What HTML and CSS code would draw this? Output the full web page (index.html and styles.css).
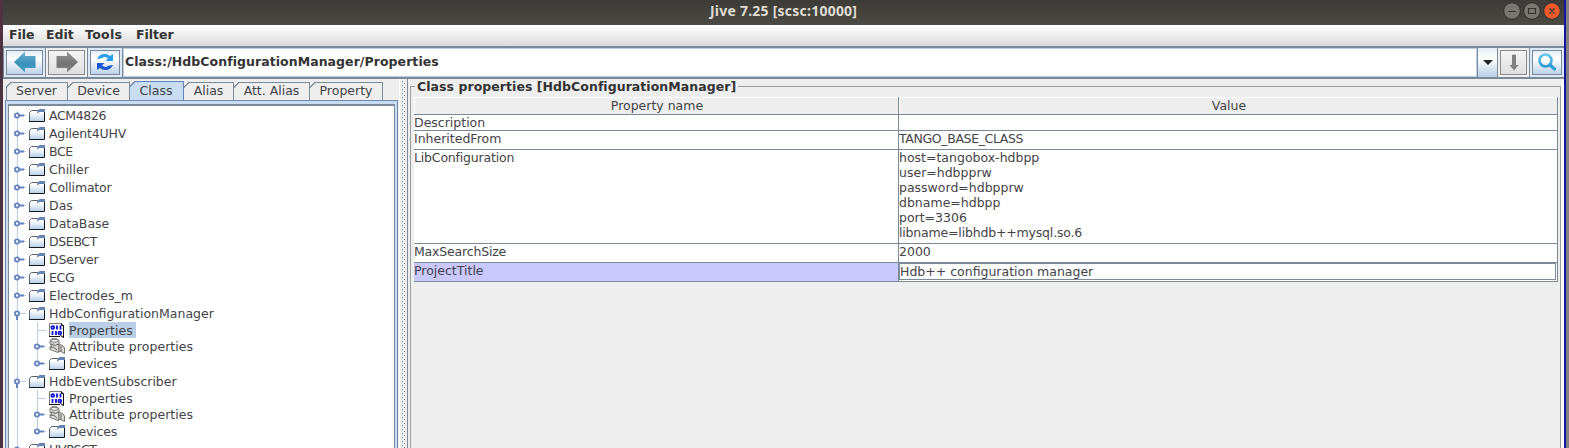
FILE: index.html
```html
<!DOCTYPE html>
<html lang="en">
<head>
<meta charset="utf-8">
<title>Jive 7.25 [scsc:10000]</title>
<link rel="stylesheet" href="styles.css">
</head>
<body>
<svg class="defs" width="0" height="0" aria-hidden="true">
  <defs>
    <linearGradient id="gFolder" x1="0" y1="0" x2="0" y2="1"><stop offset="0.2" stop-color="#fff"/><stop offset="1" stop-color="#b4cfe6"/></linearGradient>
    <linearGradient id="gBlue" x1="0" y1="0" x2="0" y2="1"><stop offset="0" stop-color="#6db4d2"/><stop offset="0.6" stop-color="#378fb8"/><stop offset="1" stop-color="#4fa5c8"/></linearGradient>
    <linearGradient id="gGray" x1="0" y1="0" x2="0" y2="1"><stop offset="0" stop-color="#969696"/><stop offset="0.6" stop-color="#727272"/><stop offset="1" stop-color="#8c8c8c"/></linearGradient>
    <linearGradient id="gLens" x1="0" y1="0" x2="0" y2="1"><stop offset="0" stop-color="#69c5ea"/><stop offset="1" stop-color="#2e98d3"/></linearGradient>
    <symbol id="folder" viewBox="0 0 16 13">
      <path d="M.5 12.500V3.500L2.500 1.500H8.500V4.500H15V12.500Z" fill="url(#gFolder)"/>
      <path d="M.5 12V3.500L2.500 1.500H9" fill="none" stroke="#59616e"/>
      <path d="M0 12.500H15.500V3" fill="none" stroke="#14171d"/>
      <path d="M8 4L8.500 2L10.500 0H16V3H10L9 4.500Z" fill="#6382b5"/>
    </symbol>
    <symbol id="knobClosed" viewBox="0 0 12 7">
      <path d="M5 3.500H10" stroke="#6382bf" stroke-width="2"/><path d="M10 3.500H12" stroke="#b8cfe5"/>
      <circle cx="3" cy="3.500" r="2.100" fill="#fff" stroke="#6382bf" stroke-width="1.800"/>
    </symbol>
    <symbol id="knobOpen" viewBox="0 0 12 12">
      <path d="M3 5V10" stroke="#6382bf" stroke-width="2"/><path d="M6 3.500H12" stroke="#b8cfe5"/>
      <circle cx="3" cy="3.500" r="2.100" fill="#fff" stroke="#6382bf" stroke-width="1.800"/>
    </symbol>
    <symbol id="bits" viewBox="0 0 16 15">
      <path d="M.5 .5H12.500L14.500 2.500V14.500L11.500 12.500L10.500 13.500H.5Z" fill="#fff" stroke="#777"/>
      <path d="M12.500 .5V2.500H14.500V14.500L11.500 12.500M0 13.500H11" fill="none" stroke="#111"/>
      <g fill="none" stroke="#1010d8" stroke-width="1.800"><circle cx="3.800" cy="4.500" r="1.400"/><path d="M8 2.500V6.500M11.500 2.500V6.500M3.500 8V12M7 8V12"/><circle cx="10.800" cy="10" r="1.400"/></g>
    </symbol>
    <symbol id="attr" viewBox="0 0 16 16">
      <path d="M1 2.500L3 .7H7.500L10 2.500V6L14 8L15.500 10V15.500L11 13L9 14.500L1 11.500V9L3 8L1 6Z" fill="#dddbd8" stroke="#555" stroke-width=".8"/>
      <ellipse cx="5.500" cy="2.800" rx="3.500" ry="1.500" fill="#f2f2f2" stroke="#666" stroke-width=".8"/>
      <path d="M2 6L6 7.500L9.500 6V14M1 9L5 9.500L8 12M12 8V13.500" fill="none" stroke="#555" stroke-width=".9"/>
      <path d="M4.500 5.500V6.500M10 7V13" stroke="#999" stroke-width="1.500"/>
    </symbol>
  </defs>
</svg>
<div class="desktop">
<div class="window">
  <header class="titlebar">
    <span class="title">Jive 7.25 [scsc:10000]</span>
    <svg class="winbtns" width="58" height="18" viewBox="0 0 58 18">
      <g stroke="#33322e"><circle cx="9" cy="9" r="8.300" fill="#787771"/><circle cx="29" cy="9" r="8.300" fill="#787771"/><circle cx="49" cy="9" r="8.300" fill="#ea5a2c"/></g>
      <path d="M5 9.500H13M25.500 6.500H32.500V11.500H25.500ZM46.500 6.500L51.500 11.500M51.500 6.500L46.500 11.500" fill="none" stroke="#34332f" stroke-width="1.200"/>
    </svg>
  </header>
  <nav class="menubar"><span class="m1">File</span><span class="m2">Edit</span><span class="m3">Tools</span><span class="m4">Filter</span></nav>
  <div class="toolbar">
    <button class="tool back"><svg width="24" height="22" viewBox="0 0 24 22"><path d="M1 11L12 .5V5H22.500V17H12V21.500Z" fill="url(#gBlue)"/></svg></button>
    <button class="tool fwd off"><svg width="24" height="22" viewBox="0 0 24 22"><path d="M23 11L12 .5V5H1.500V17H12V21.500Z" fill="url(#gGray)"/></svg></button>
    <button class="tool refresh"><svg width="18" height="18" viewBox="0 0 18 18"><path d="M1 6Q4 .5 9 1Q12 1 14 3L17 1V8H9.500L12 5.500Q9 3 6 5Q3 6 1 6Z" fill="#2a9cec"/><path d="M17 12Q14 17.500 9 17Q6 17 4 15L1 17V10H8.500L6 12.500Q9 15 12 13Q15 12 17 12Z" fill="#1d58d4"/></svg></button>
    <div class="path">Class:/HdbConfigurationManager/Properties</div>
    <div class="drop"><svg width="10" height="5" viewBox="0 0 10 5"><path d="M0 0H10L5 5Z" fill="#222"/></svg></div>
    <button class="tool down off"><svg width="10" height="17" viewBox="0 0 10 17"><path d="M3 1Q5 0 7 1V11H9.500L5 16.500L.5 11H3Z" fill="#808080"/></svg></button>
    <button class="tool search"><svg width="18" height="18" viewBox="0 0 18 18"><circle cx="7.500" cy="7.500" r="6" fill="none" stroke="url(#gLens)" stroke-width="2.600"/><path d="M12 12L16.500 16" stroke="#2e9ad6" stroke-width="3.200" stroke-linecap="round"/></svg></button>
  </div>
  <main class="body">
    <section class="left">
      <div class="tabs">
        <div class="tab t1"><span>Server</span></div><div class="tab t2"><span>Device</span></div><div class="tab t3 on"><span>Class</span></div><div class="tab t4"><span>Alias</span></div><div class="tab t5"><span>Att. Alias</span></div><div class="tab t6"><span>Property</span></div>
      </div>
      <div class="pane"><div class="tree">
        <div class="row"><svg class="knob"><use href="#knobClosed"/></svg><svg class="folder"><use href="#folder"/></svg><span class="narrow">ACM4826</span></div>
        <div class="row"><svg class="knob"><use href="#knobClosed"/></svg><svg class="folder"><use href="#folder"/></svg><span class="snug">Agilent4UHV</span></div>
        <div class="row"><svg class="knob"><use href="#knobClosed"/></svg><svg class="folder"><use href="#folder"/></svg><span class="narrow">BCE</span></div>
        <div class="row"><svg class="knob"><use href="#knobClosed"/></svg><svg class="folder"><use href="#folder"/></svg><span>Chiller</span></div>
        <div class="row"><svg class="knob"><use href="#knobClosed"/></svg><svg class="folder"><use href="#folder"/></svg><span class="snug">Collimator</span></div>
        <div class="row"><svg class="knob"><use href="#knobClosed"/></svg><svg class="folder"><use href="#folder"/></svg><span>Das</span></div>
        <div class="row"><svg class="knob"><use href="#knobClosed"/></svg><svg class="folder"><use href="#folder"/></svg><span>DataBase</span></div>
        <div class="row"><svg class="knob"><use href="#knobClosed"/></svg><svg class="folder"><use href="#folder"/></svg><span class="narrow">DSEBCT</span></div>
        <div class="row"><svg class="knob"><use href="#knobClosed"/></svg><svg class="folder"><use href="#folder"/></svg><span class="snug">DServer</span></div>
        <div class="row"><svg class="knob"><use href="#knobClosed"/></svg><svg class="folder"><use href="#folder"/></svg><span class="narrow">ECG</span></div>
        <div class="row"><svg class="knob"><use href="#knobClosed"/></svg><svg class="folder"><use href="#folder"/></svg><span>Electrodes_m</span></div>
        <div class="row"><svg class="knob open"><use href="#knobOpen"/></svg><svg class="folder"><use href="#folder"/></svg><span>HdbConfigurationManager</span></div>
        <div class="kids">
          <div class="row short"><i class="knob stub"></i><svg class="bits"><use href="#bits"/></svg><span class="wide sel">Properties</span></div>
          <div class="row short"><svg class="knob"><use href="#knobClosed"/></svg><svg class="attr"><use href="#attr"/></svg><span class="wide">Attribute properties</span></div>
          <div class="row"><svg class="knob"><use href="#knobClosed"/></svg><svg class="folder"><use href="#folder"/></svg><span class="snug">Devices</span></div>
        </div>
        <div class="row"><svg class="knob open"><use href="#knobOpen"/></svg><svg class="folder"><use href="#folder"/></svg><span>HdbEventSubscriber</span></div>
        <div class="kids">
          <div class="row short"><i class="knob stub"></i><svg class="bits"><use href="#bits"/></svg><span class="wide">Properties</span></div>
          <div class="row short"><svg class="knob"><use href="#knobClosed"/></svg><svg class="attr"><use href="#attr"/></svg><span class="wide">Attribute properties</span></div>
          <div class="row"><svg class="knob"><use href="#knobClosed"/></svg><svg class="folder"><use href="#folder"/></svg><span class="snug">Devices</span></div>
        </div>
        <div class="row"><svg class="knob"><use href="#knobClosed"/></svg><svg class="folder"><use href="#folder"/></svg><span class="narrow">HVPSCT</span></div>
      </div></div>
    </section>
    <div class="splitter"><i></i></div>
    <section class="right">
      <fieldset class="group">
        <legend>Class properties [HdbConfigurationManager]</legend>
        <div class="table">
          <div class="th">Property name</div><div class="th">Value</div>
          <div class="td">Description</div><div class="td"></div>
          <div class="td">InheritedFrom</div><div class="td narrow">TANGO_BASE_CLASS</div>
          <div class="td snug">LibConfiguration</div><div class="td">host=tangobox-hdbpp<br>user=hdbpprw<br>password=hdbpprw<br>dbname=hdbpp<br>port=3306<br><span class="snug">libname=libhdb++mysql.so.6</span></div>
          <div class="td snug">MaxSearchSize</div><div class="td">2000</div>
          <div class="td picked">ProjectTitle</div><div class="td edit"><div>Hdb++ configuration manager</div></div>
        </div>
      </fieldset>
    </section>
  </main>
</div>
<div class="edge"></div>
</div>
</body>
</html>
```
FILE: styles.css
```css
* { box-sizing: border-box; }
body { margin: 0; overflow: hidden; font: 12.5px/15px "DejaVu Sans", sans-serif; color: #434347; }
.defs { display: block; height: 0; }
.desktop { display: flex; width: 1569px; height: 448px; background: #4e3440; padding-left: 3px; overflow: hidden; }
.window { width: 1561px; height: 448px; display: flex; flex-direction: column; background: #eee; }
.edge { width: 5px; border-left: 2px solid #1515a0; background: #828282; }

.titlebar { height: 25px; background: linear-gradient(#3c3b37, #4b4a44); display: grid; grid-template-columns: 707px 1fr 58px; padding-right: 3px; flex: none; }
.title { grid-column: 2; font: bold 14px/22px "Noto Sans", sans-serif; letter-spacing: 0.23px; color: #dfdbd2; }
.winbtns { margin-top: 2px; }

.menubar { height: 21px; flex: none; display: flex; background: linear-gradient(#fff, #dadada); font-weight: bold; line-height: 19px; padding-left: 6px; color: #333; }
.m1 { width: 37px; } .m2 { width: 39px; } .m3 { width: 51px; letter-spacing: 0.3px; }

.toolbar { height: 33px; flex: none; display: flex; background: #7a8a99; padding: 1px 0 2px 1px; border-top: 1px solid #7a8a99; gap: 1px; }
.tool { flex: none; border: 2px solid #dce9f5; padding: 0; outline: 1px solid #7a8a99; outline-offset: -3px; background: linear-gradient(#dfeaf5, #fff 35%, #b8cfe5); display: grid; place-items: center; }
.off { border-color: #eee; outline-color: #8b8b8b; background: linear-gradient(#f4f4f4, #dedede); }
.back { width: 41px; } .fwd { width: 41px; } .refresh { width: 34px; }
.tool svg { margin-bottom: 1px; }
.path { flex: 1; background: #fff; border: 1px solid #b8cfe5; font-weight: bold; letter-spacing: 0.06px; line-height: 25px; padding-left: 1px; color: #333; }
.drop { width: 19px; background: linear-gradient(#e3edf7, #fff 35%, #b8cfe5); display: grid; place-items: center; }
.down { width: 31px; } .search { width: 34px; }

.body { display: flex; height: 369px; }
.left { width: 396px; padding: 2px 1px 0 2px; flex: none; }
.tabs { display: flex; height: 19px; padding-left: 1px; align-items: flex-end; }
.tab { height: 18px; position: relative; text-align: center; line-height: 17px; background: linear-gradient(135deg, #eee 3.2px, #7a8a99 3.4px, #7a8a99 4.2px, #eee 4.4px); border-right: 1px solid #7a8a99; }
.tab::before { content: ""; position: absolute; left: 5px; right: 0; top: 0; border-top: 1px solid #7a8a99; }
.t1 { width: 62px; } .t2 { width: 62px; } .t3 { width: 54px; } .t4 { width: 50px; } .t5 { width: 76px; } .t6 { width: 73px; }
.t1::after { content: ""; position: absolute; left: 0; top: 5px; bottom: 0; border-left: 1px solid #7a8a99; }
.on { height: 19px; line-height: 19px; padding-right: 1px; border-color: #6382bf; background: linear-gradient(135deg, #eee 3.2px, #6382bf 3.4px, #6382bf 4.2px, #c8ddf2 4.4px); }
.on::before { border-color: #6382bf; }
.pane { height: 349px; border: 1px solid #7189ad; border-bottom: 0; background: #c8ddf2; padding: 3px 2px 0; }
.tree { height: 345px; background: #fff; border: 1px solid #7a8a99; border-top-width: 2px; border-bottom: 0; overflow: hidden; padding-left: 5px; background-image: linear-gradient(#b8cfe5, #b8cfe5); background-size: 1px 100%; background-position: 8px 5px; background-repeat: no-repeat; }
.row { height: 18px; display: flex; align-items: center; white-space: nowrap; }
.short { height: 16px; }
.row span { height: 15px; line-height: 15px; }
.knob { width: 12px; height: 7px; margin-right: 3px; flex: none; }
.open { height: 12px; margin-top: 5px; }
.folder { width: 16px; height: 13px; margin-right: 4px; flex: none; }
.bits { width: 16px; height: 15px; margin-right: 4px; flex: none; }
.attr { width: 16px; height: 16px; margin-right: 4px; flex: none; }
.stub { height: 1px; width: 9px; margin-left: 3px; background: #b8cfe5; }
.kids { padding-left: 20px; background: linear-gradient(#b8cfe5, #b8cfe5) 23px 0 / 1px 42px no-repeat; }
.row .sel { background: #b8cfe5; padding-right: 3px; height: 16px; line-height: 17px; }
.narrow { letter-spacing: -0.36px; }
.snug { letter-spacing: -0.18px; }
.wide { letter-spacing: 0.06px; }

.splitter { width: 9px; flex: none; padding: 2px 2px 0 3px; border-right: 1px solid #7a8a99; background: linear-gradient(90deg, #fff 1px, transparent 1px); }
.splitter i { display: block; height: 100%; background: radial-gradient(circle at 0.5px 0.5px, #7a8a99 0.6px, transparent 0.7px) 0 0 / 4px 4px, radial-gradient(circle at 2.5px 2.5px, #7a8a99 0.6px, transparent 0.7px) 0 0 / 4px 4px; }
.right { flex: 1; background: linear-gradient(#fff, #fff) right / 3px 100% no-repeat #eee; padding: 0 3px 0 2px; }
.group { margin: 0; height: 380px; border: 1px solid #9a9f9f; padding: 0 2px 0 3px; background: #eee; min-width: 0; }
legend { font-weight: bold; letter-spacing: 0.05px; padding: 0 2px; margin-left: 1px; height: 15px; color: #333; }
.table { display: grid; grid-template-columns: 485px 1fr; grid-template-rows: 18px 16px 19px 94px 19px 19px; margin-top: 3px; }
.th { text-align: center; border: solid #7a8a99; border-width: 0 1px 1px 0; box-shadow: inset 1px 1px #fff; line-height: 18px; padding-left: 2px; }
.td { background: #fff; border: solid #7a8a99; border-width: 0 1px 1px 0; }
.picked { background: #c9c8ff; }
.edit { padding: 0 1px 1px 0; }
.edit div { border: 1px solid #7a8a99; height: 17px; line-height: 15px; }
```
